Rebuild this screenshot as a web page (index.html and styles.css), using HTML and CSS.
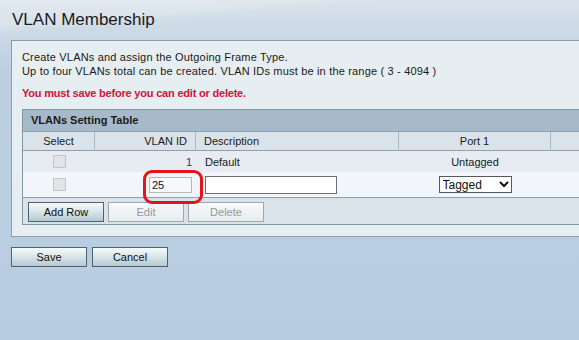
FILE: index.html
```html
<!DOCTYPE html>
<html lang="en">
<head>
    <meta charset="UTF-8">
    <title>VLAN Membership</title>
    <link rel="stylesheet" href="styles.css">
</head>
<body>
    <h1 class="page-title">VLAN Membership</h1>

    <div class="panel">
        <p class="intro">Create VLANs and assign the Outgoing Frame Type.<br>Up to four VLANs total can be created. VLAN IDs must be in the range ( 3 - 4094 )</p>
        <p class="warning">You must save before you can edit or delete.</p>

        <div class="vlan-table">
            <div class="table-title">VLANs Setting Table</div>
            <table class="vlan-grid">
                <colgroup>
                    <col class="w-select">
                    <col class="w-id">
                    <col class="w-desc">
                    <col class="w-port">
                    <col class="w-rest">
                </colgroup>
                <thead>
                    <tr>
                        <th class="col-select">Select</th>
                        <th class="col-id">VLAN ID</th>
                        <th class="col-desc">Description</th>
                        <th class="col-port">Port 1</th>
                        <th class="col-rest"></th>
                    </tr>
                </thead>
                <tbody>
                    <tr class="row-saved">
                        <td class="col-select"><span class="checkbox"></span></td>
                        <td class="col-id id-value">1</td>
                        <td class="col-desc">Default</td>
                        <td class="col-port">Untagged</td>
                        <td></td>
                    </tr>
                    <tr class="row-new">
                        <td class="col-select"><span class="checkbox"></span></td>
                        <td class="col-id">
                            <span class="id-wrap">
                                <input type="text" class="id-input" value="25">
                                <span class="highlight"></span>
                            </span>
                        </td>
                        <td class="col-desc"><input type="text" class="desc-input"></td>
                        <td class="col-port">
                            <span class="select-wrap">
                                <select class="port-select">
                                    <option>Tagged</option>
                                    <option>Untagged</option>
                                    <option>Excluded</option>
                                </select>
                                <svg class="chevron" width="10" height="7" viewBox="0 0 10 7"><polyline points="1,1 5,5 9,1" fill="none" stroke="#111" stroke-width="2"/></svg>
                            </span>
                        </td>
                        <td></td>
                    </tr>
                </tbody>
            </table>
            <div class="table-actions">
                <button class="btn">Add Row</button>
                <button class="btn" disabled>Edit</button>
                <button class="btn" disabled>Delete</button>
            </div>
        </div>
    </div>

    <div class="page-actions">
        <button class="btn">Save</button>
        <button class="btn">Cancel</button>
    </div>
</body>
</html>
```

FILE: styles.css
```css
html, body {
    height: 340px;
}
body {
    margin: 0;
    overflow: hidden;
    font-family: 'Liberation Sans', Arial, sans-serif;
    font-size: 11px;
    color: #1a1a1a;
    background:
        linear-gradient(175deg, rgba(255, 255, 255, 0.22) 0, rgba(255, 255, 255, 0.22) 26px, rgba(255, 255, 255, 0) 34px),
        linear-gradient(180deg, #d8e2ea 0, #ccd9e6 32px, #bccfe2 70px, #b8cce1 100%);
}
.page-title {
    margin: 10px 0 10px 12px;
    font-size: 17px;
    line-height: 20px;
    font-weight: normal;
    color: #1a1a1a;
}
/* panel runs off the right edge in the original, so no right border */
.panel {
    margin-left: 11px;
    background: #e7eef1;
    border: 1px solid #8c9ea8;
    border-right: 0;
    padding: 9px 0 11px 10px;
}
.intro {
    margin: 0;
    line-height: 14px;
    letter-spacing: 0.18px;
}
.warning {
    margin: 8px 0 0;
    line-height: 14px;
    font-weight: bold;
    letter-spacing: -0.2px;
    color: #d3123a;
}
.vlan-table {
    margin-top: 9px;
    border: 1px solid #8398a5;
    border-right: 0;
    background: #dbe3ea;
}
.table-title {
    height: 21px;
    line-height: 21px;
    padding-left: 8px;
    background: #a5b9c8;
    font-weight: bold;
    border-bottom: 1px solid #8fa3b0;
}
.vlan-grid {
    width: 100%;
    table-layout: fixed;
    border-collapse: separate;
    border-spacing: 0;
}
.w-select { width: 72px; }
.w-id { width: 101px; }
.w-desc { width: 203px; }
.w-port { width: 152px; }
.vlan-grid th {
    height: 18px;
    padding: 0;
    font-weight: normal;
    background: #dbe3ea;
    border-right: 1px solid #a9b8c3;
    border-bottom: 1px solid #8ea2ae;
}
.vlan-grid th.col-rest {
    border-right: 0;
}
.vlan-grid td {
    padding: 0;
    vertical-align: middle;
}
.col-select { text-align: center; }
.vlan-grid th.col-id { text-align: right; padding-right: 8px; }
.vlan-grid td.col-id { text-align: right; padding-right: 4px; }
.vlan-grid .col-desc { text-align: left; padding-left: 8px; }
.vlan-grid td.col-desc { padding-left: 9px; }
.col-port { text-align: center; }
.row-saved td {
    height: 21px;
    background: #e6ecf1;
}
.row-new td {
    height: 25px;
    background: #f2f6fa;
    border-bottom: 1px solid #8ea2ae;
}
.id-value {
    color: #1f3478;
}
.checkbox {
    display: inline-block;
    width: 11px;
    height: 11px;
    background: #e2e4e6;
    border: 1px solid #c3c6c9;
    vertical-align: middle;
}
.id-wrap {
    position: relative;
    display: inline-block;
    vertical-align: middle;
}
.id-input {
    display: block;
    box-sizing: border-box;
    width: 43px;
    height: 16px;
    margin: 0;
    padding: 0 2px;
    border: 1px solid #b4b8bc;
    background: #f6f8fa;
    font-family: 'Liberation Sans', Arial, sans-serif;
    font-size: 11px;
    color: #111;
}
.highlight {
    position: absolute;
    left: -6px;
    top: -7px;
    width: 60px;
    height: 34px;
    box-sizing: border-box;
    border: 3px solid #e3141c;
    border-radius: 9px;
}
.desc-input {
    display: block;
    box-sizing: border-box;
    width: 132px;
    height: 18px;
    margin: 0;
    border: 1px solid #6b6f73;
    background: #fff;
}
.select-wrap {
    position: relative;
    display: inline-block;
    vertical-align: middle;
}
.port-select {
    display: block;
    -webkit-appearance: none;
    appearance: none;
    box-sizing: border-box;
    width: 73px;
    height: 17px;
    margin: 0;
    padding: 0 0 0 3px;
    border: 1px solid #555a5e;
    border-radius: 0;
    background: #fff;
    font-family: 'Liberation Sans', Arial, sans-serif;
    font-size: 12px;
    color: #111;
}
.chevron {
    position: absolute;
    right: 3px;
    top: 5px;
    pointer-events: none;
}
.table-actions {
    display: flex;
    gap: 4px;
    padding: 4px 0 2px 5px;
    background: #dbe3ea;
}
.btn {
    box-sizing: border-box;
    width: 76px;
    height: 20px;
    margin: 0;
    padding: 0;
    border: 1px solid #4d626e;
    background: linear-gradient(#f6fafb, #dbe7ea 45%, #b2c9d1);
    font-family: 'Liberation Sans', Arial, sans-serif;
    font-size: 11px;
    color: #111;
}
.btn:disabled {
    border-color: #a3a7aa;
    background: linear-gradient(#f7f9fa, #e6ecef);
    color: #8f9aa2;
}
.page-actions {
    display: flex;
    gap: 5px;
    margin: 10px 0 0 11px;
}
```
